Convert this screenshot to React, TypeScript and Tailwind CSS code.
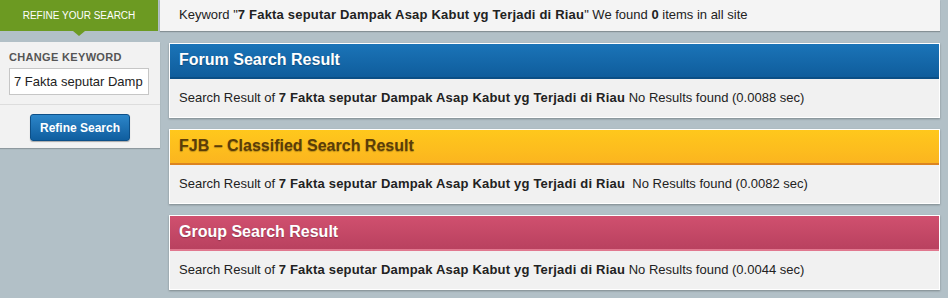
import React from 'react';

const keyword = '7 Fakta seputar Dampak Asap Kabut yg Terjadi di Riau';

const results = [
  {
    title: 'Forum Search Result',
    header: 'bg-gradient-to-b from-[#1b74b8] to-[#0f5d9c] border-b-2 border-[#0b4f86] text-white',
    gap: ' ',
    time: '0.0088',
  },
  {
    title: 'FJB \u2013 Classified Search Result',
    header: 'bg-gradient-to-b from-[#ffc81c] to-[#fbb51f] border-b-2 border-[#dc8420] text-[#5b3d08]',
    gap: '\u00a0 ',
    time: '0.0082',
  },
  {
    title: 'Group Search Result',
    header: 'bg-gradient-to-b from-[#d0506f] to-[#b9415f] border-b-2 border-[#e1788f] text-white',
    gap: ' ',
    time: '0.0044',
  },
];

const App: React.FC = () => {
  return (
    <div className="w-[948px] h-[298px] bg-[#b2c0c7] overflow-hidden font-['Liberation_Sans',Arial,sans-serif] text-[13px] text-[#222]">
      {/* top row */}
      <div className="flex h-[32px]">
        <div className="relative w-[158px] h-[31px] bg-[#6c9a22] text-white text-[10px] flex items-center justify-center">
          REFINE YOUR SEARCH
          <div className="absolute left-[73px] top-[31px] w-0 h-0 border-l-[6px] border-r-[6px] border-t-[5px] border-l-transparent border-r-transparent border-t-[#6c9a22]"></div>
        </div>
        <div className="ml-[2px] w-[780px] h-[31px] bg-[#f4f4f4] shadow-[0_1px_1px_rgba(0,0,0,0.25)] pl-[19px] pt-[7px] leading-[16px] whitespace-pre">
          <span>Keyword "<b className="tracking-[0.2px]">{keyword}</b>" We found <b>0</b> items in all site</span>
        </div>
      </div>

      <div className="flex mt-[10px]">
        {/* sidebar */}
        <div className="w-[160px] h-[106px] bg-[#f2f2f2] shadow-[0_1px_1px_rgba(0,0,0,0.2)]">
          <div className="px-[9px] pt-[9px] pb-[9px] border-b border-[#dddddd]">
            <div className="text-[11px] font-bold text-[#555] tracking-[0.03em] leading-[13px]">CHANGE KEYWORD</div>
            <div className="mt-[4px] h-[27px] w-[140px] bg-white border border-[#c6c6c6] px-[4px] flex items-center overflow-hidden whitespace-nowrap text-[13px] text-[#222]">
              7 Fakta seputar Damp
            </div>
          </div>
          <div className="flex justify-center pt-[9px]">
            <div className="w-[100px] h-[27px] rounded-[3px] bg-gradient-to-b from-[#2c86c9] to-[#0f5e9f] border border-[#0d4f87] text-white font-bold text-[12px] flex items-center justify-center shadow-[0_1px_1px_rgba(0,0,0,0.3)]">
              Refine Search
            </div>
          </div>
        </div>

        {/* results */}
        <div className="ml-[9px] w-[771px] flex flex-col gap-[11px] mt-[1px]">
          {results.map((r, i) => (
            <div key={i} className="border border-white bg-[#f1f1f1] shadow-[0_1px_2px_rgba(0,0,0,0.3)]">
              <div className={`h-[35px] flex items-center pl-[9px] pb-[1px] text-[16px] font-bold [text-shadow:0_1px_1px_rgba(0,0,0,0.25)] ${r.header}`}>
                {r.title}
              </div>
              <div className="h-[38px] pl-[9px] pt-[11px] leading-[16px] whitespace-pre">
                <span>Search Result of <b className="tracking-[0.2px]">{keyword}</b>{r.gap}No Results found ({r.time} sec)</span>
              </div>
            </div>
          ))}
        </div>
      </div>
    </div>
  );
};

export default App;
